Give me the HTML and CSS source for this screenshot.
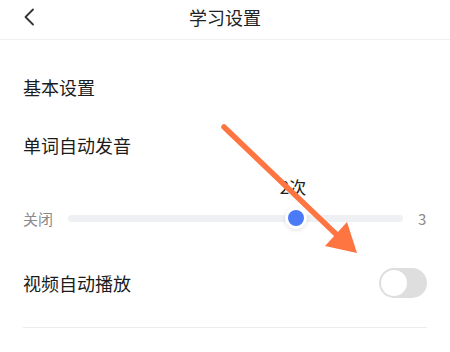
FILE: index.html
```html
<!DOCTYPE html>
<html>
<head>
  <meta charset="utf-8">
  <title>学习设置</title>
  <link rel="stylesheet" href="styles.css">
</head>
<body>
  <div class="page">
    <header class="topbar">
      <span class="back">
        <svg width="12" height="18" viewBox="0 0 12 18"><path d="M10 1.5 L2.5 9 L10 16.5" fill="none" stroke="#333" stroke-width="1.8" stroke-linecap="round" stroke-linejoin="round"/></svg>
      </span>
      <h1 class="title">学习设置</h1>
      <span></span>
    </header>

    <div class="content">
      <div class="section-title">基本设置</div>

      <div class="row-label">单词自动发音</div>

      <div class="slider-row">
        <span class="slider-end">关闭</span>
        <div class="track">
          <div class="thumb-wrap" style="left: 68%">
            <span class="thumb-value">2次</span>
            <span class="thumb"></span>
          </div>
        </div>
        <span class="slider-end max">3</span>
      </div>

      <div class="switch-row">
        <span class="switch-label">视频自动播放</span>
        <span class="switch"><span class="knob"></span></span>
      </div>

      <div class="divider"></div>
    </div>

    <!-- annotation arrow drawn over the screenshot -->
    <svg class="arrow" width="450" height="352" viewBox="0 0 450 352">
      <line x1="224" y1="127" x2="338" y2="236" stroke="#ff7542" stroke-width="5.5" stroke-linecap="round"/>
      <polygon points="357,253 325,246 347,222" fill="#ff7542"/>
    </svg>
  </div>
</body>
</html>
```

FILE: styles.css
```css
body {
  margin: 0;
  background: #fff;
  font-family: "Noto Sans CJK SC", "Noto Sans", sans-serif;
  color: #1c1c1c;
}

.page {
  position: relative;
  width: 450px;
  height: 352px;
  overflow: hidden;
}

.topbar {
  display: grid;
  grid-template-columns: 1fr auto 1fr;
  align-items: center;
  height: 31px;
  padding: 1px 23px 7px;
  border-bottom: 1px solid #f1f1f1;
}

.back {
  display: flex;
  align-items: center;
}

.title {
  margin: 0;
  font-size: 18px;
  font-weight: 400;
  line-height: 24px;
  color: #222;
}

.content {
  padding: 0 23px;
}

.section-title {
  margin-top: 35px;
  font-size: 18px;
  line-height: 24px;
}

.row-label {
  margin-top: 34px;
  font-size: 18px;
  line-height: 24px;
}

.slider-row {
  display: flex;
  align-items: center;
  gap: 15px;
  height: 24px;
  margin-top: 49px;
}

.slider-end {
  font-size: 15px;
  color: #8a8a8a;
}

.slider-end.max {
  width: 9px;
}

.track {
  position: relative;
  flex: 1;
  height: 7px;
  border-radius: 4px;
  background: #eef0f4;
}

.thumb-wrap {
  position: absolute;
  top: 50%;
  width: 0;
  height: 0;
}

.thumb {
  position: absolute;
  left: -11px;
  top: -11px;
  width: 16px;
  height: 16px;
  border: 3px solid #fff;
  border-radius: 50%;
  background: #4a7af6;
  box-shadow: 0 1px 4px rgba(0, 0, 0, 0.12);
}

.thumb-value {
  position: absolute;
  left: -16px;
  top: -42px;
  font-size: 17px;
  line-height: 22px;
  color: #222;
  white-space: nowrap;
}

.switch-row {
  display: flex;
  justify-content: space-between;
  align-items: center;
  height: 30px;
  margin-top: 38px;
}

.switch-label {
  font-size: 18px;
  line-height: 24px;
}

.switch {
  display: flex;
  align-items: center;
  width: 48px;
  height: 30px;
  padding: 0 2px;
  box-sizing: border-box;
  border-radius: 15px;
  background: #dedede;
}

.knob {
  width: 26px;
  height: 26px;
  border-radius: 50%;
  background: #fff;
}

.divider {
  margin-top: 29px;
  height: 1px;
  background: #ececec;
}

.arrow {
  position: absolute;
  left: 0;
  top: 0;
  pointer-events: none;
}
```
